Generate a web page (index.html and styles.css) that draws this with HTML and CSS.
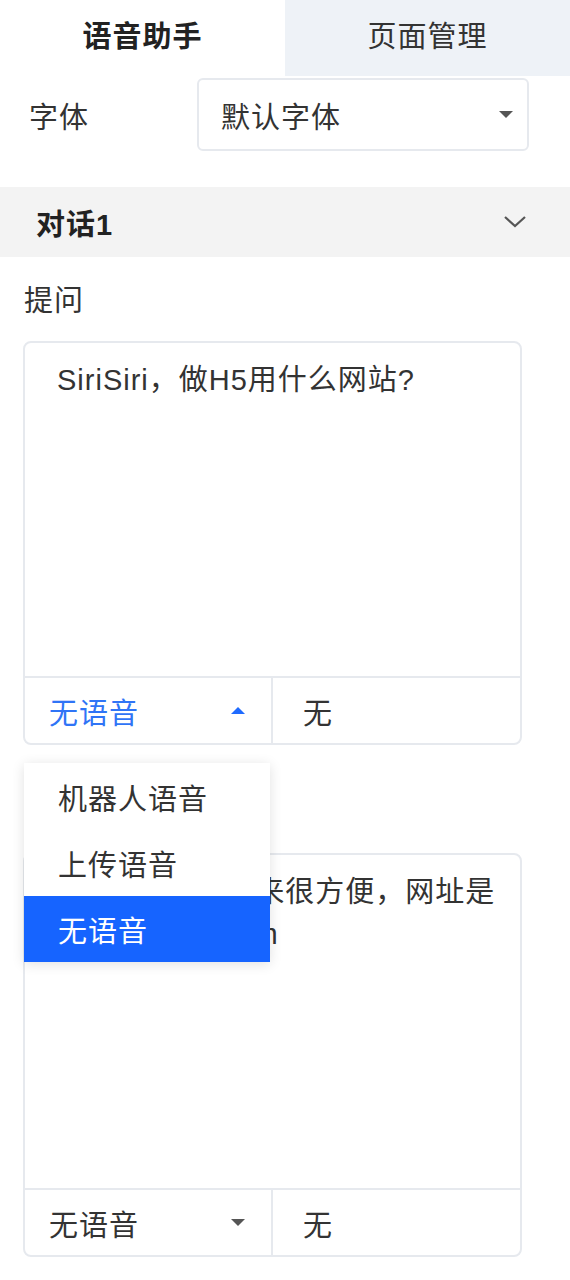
FILE: index.html
```html
<!DOCTYPE html>
<html lang="zh-CN">
<head>
<meta charset="utf-8">
<title>语音助手</title>
<link rel="stylesheet" href="styles.css">
</head>
<body>
<div class="panel">
  <div class="tabs">
    <div class="tab tab-active">语音助手</div>
    <div class="tab">页面管理</div>
  </div>

  <div class="font-row">
    <div class="font-label">字体</div>
    <div class="select">
      <span class="select-text">默认字体</span>
      <span class="caret caret-down"></span>
    </div>
  </div>

  <div class="collapse-head">
    <span class="collapse-title">对话1</span>
    <svg class="chevron" width="24" height="14" viewBox="0 0 24 14"><path d="M2 2 L12 11 L22 2" fill="none" stroke="#555" stroke-width="2.2"/></svg>
  </div>

  <div class="section">
    <div class="section-label">提问</div>
    <div class="box">
      <div class="box-text">SiriSiri，做H5用什么网站?</div>
      <div class="box-foot">
        <div class="voice-cell voice-open">
          <span class="voice-text">无语音</span>
          <span class="caret caret-up"></span>
          <div class="dropdown">
            <div class="dd-item">机器人语音</div>
            <div class="dd-item">上传语音</div>
            <div class="dd-item dd-selected">无语音</div>
          </div>
        </div>
        <div class="value-cell">无</div>
      </div>
    </div>
  </div>

  <div class="section section-second">
    <div class="section-label">回答</div>
    <div class="box">
      <div class="box-text">易企秀 H5用起来很方便，网址是<br><span class="url">www.eqxiu.com</span></div>
      <div class="box-foot">
        <div class="voice-cell">
          <span class="voice-text">无语音</span>
          <span class="caret caret-down"></span>
        </div>
        <div class="value-cell">无</div>
      </div>
    </div>
  </div>
</div>
</body>
</html>
```

FILE: styles.css
```css
* { box-sizing: border-box; }

body {
  margin: 0;
  background: #ffffff;
  font-family: "Liberation Sans", "Noto Sans CJK SC", sans-serif;
  font-size: 29px;
  letter-spacing: 1px;
  color: #333333;
}

.panel {
  width: 570px;
}

.tabs {
  display: flex;
  height: 76px;
}

.tab {
  flex: 1;
  display: flex;
  align-items: center;
  justify-content: center;
  background: #eef2f7;
  color: #333;
  padding-bottom: 9px;
}

.tab-active {
  background: #ffffff;
  font-weight: bold;
  color: #222;
}

.font-row {
  display: flex;
  align-items: center;
  margin-top: 2px;
  padding-left: 29px;
}

.font-label {
  width: 168px;
}

.select {
  width: 332px;
  height: 73px;
  border: 2px solid #e6e9ee;
  border-radius: 6px;
  display: flex;
  align-items: center;
  justify-content: space-between;
  padding: 0 14px 0 22px;
}

.caret {
  display: inline-block;
  width: 0;
  height: 0;
  border-left: 7px solid transparent;
  border-right: 7px solid transparent;
}

.caret-down {
  border-top: 7px solid #555;
}

.caret-up {
  border-bottom: 7px solid #1f6bff;
}

.collapse-head {
  margin-top: 36px;
  height: 70px;
  background: #f3f3f3;
  display: flex;
  align-items: center;
  justify-content: space-between;
  padding: 0 43px 0 36px;
}

.collapse-title {
  font-weight: bold;
  color: #222;
}

.section {
  padding: 0 48px 0 23px;
}

.section-label {
  margin-top: 24px;
  line-height: 40px;
  margin-bottom: 20px;
  padding-left: 1px;
}

.section-second .section-label {
  margin-top: 44px;
  margin-bottom: 24px;
}

.box {
  border: 2px solid #e6e9ee;
  border-radius: 8px;
}

.box-text {
  height: 333px;
  padding: 16px 0 0 32px;
  line-height: 42px;
  color: #333;
  white-space: nowrap;
  overflow: hidden;
}

.url {
  letter-spacing: 1.6px;
}

.box-foot {
  display: flex;
  height: 67px;
  border-top: 2px solid #e6e9ee;
}

.voice-cell {
  position: relative;
  width: 248px;
  display: flex;
  align-items: center;
  justify-content: space-between;
  padding: 0 26px 0 24px;
  border-right: 2px solid #e6e9ee;
}

.voice-open .voice-text {
  color: #2f74f6;
}

.value-cell {
  flex: 1;
  display: flex;
  align-items: center;
  padding-left: 30px;
}

.dropdown {
  position: absolute;
  left: -1px;
  top: calc(100% + 20px);
  width: 246px;
  padding-top: 1px;
  background: #ffffff;
  box-shadow: 0 2px 12px rgba(0, 0, 0, 0.12);
  z-index: 5;
}

.dd-item {
  height: 66px;
  display: flex;
  align-items: center;
  padding-left: 34px;
  color: #333;
}

.dd-selected {
  background: #1664ff;
  color: #ffffff;
}
```
